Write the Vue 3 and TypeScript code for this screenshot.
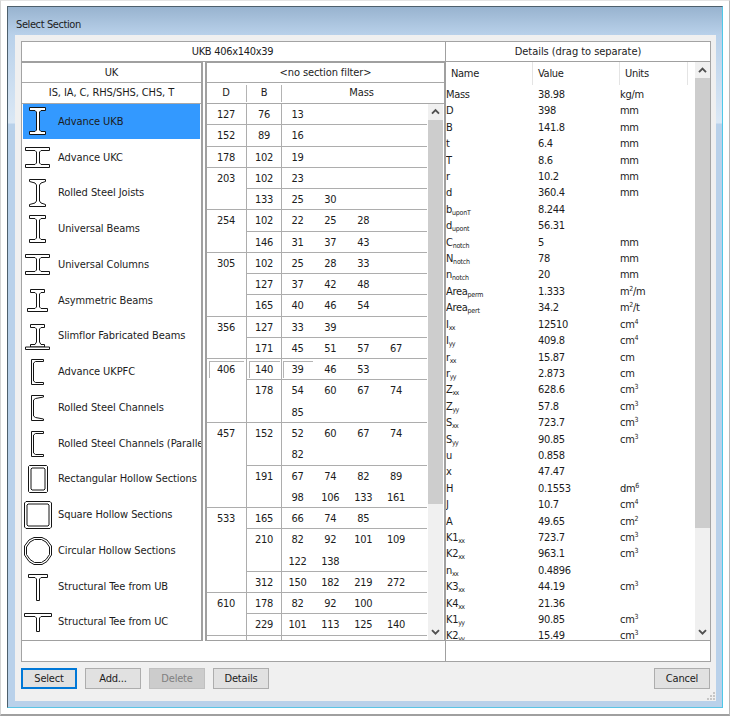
<script setup lang="ts">
interface Section {
  label: string
  paths: string[]
}
interface SizeRow {
  b: number
  masses: number[][]
  current?: boolean
}
interface SizeGroup {
  d: number
  rows: SizeRow[]
  current?: boolean
}
interface Detail {
  name: string
  sub?: string
  value: string
  unit?: string
  sup?: string
  tail?: string
}

const beam =
  'M6.5 2.5H22.5V5.5H18L16.5 7V25L18 26.5H22.5V29.5H6.5V26.5H12L13.5 25V7L12 5.5H6.5Z'
const column =
  'M2.5 5.5H26.5V8.5H18L16.5 10V21L18 22.5H26.5V25.5H2.5V22.5H12L13.5 21V10L12 8.5H2.5Z'
const channel = 'M8.5 3.5H20.5V5.5H12.5L10.5 7V25L12.5 26.5H20.5V28.5H8.5Z'

const sections: Section[] = [
  { label: 'Advance UKB', paths: [beam] },
  { label: 'Advance UKC', paths: [column] },
  {
    label: 'Rolled Steel Joists',
    paths: [
      'M6.5 2.5H22.5V4.5L18 6L16.5 8V24L18 26L22.5 27.5V29.5H6.5V27.5L12 26L13.5 24V8L12 6L6.5 4.5Z',
    ],
  },
  { label: 'Universal Beams', paths: [beam] },
  { label: 'Universal Columns', paths: [column] },
  {
    label: 'Asymmetric Beams',
    paths: [
      'M7.5 4.5H21.5V7.5H18L16.5 9V22L18 23.5H24.5V26.5H4.5V23.5H12L13.5 22V9L12 7.5H7.5Z',
    ],
  },
  {
    label: 'Slimflor Fabricated Beams',
    paths: [
      'M7.5 4.5H21.5V7.5H18L16.5 9V22L18 24.5H21.5V27H7.5V24.5H12L13.5 22V9L12 7.5H7.5Z',
      'M2.5 27H26.5V29.5H2.5Z',
    ],
  },
  { label: 'Advance UKPFC', paths: [channel] },
  {
    label: 'Rolled Steel Channels',
    paths: ['M8.5 3.5H20.5V5L12.5 6.5L10.5 8V24L12.5 25.5L20.5 27V28.5H8.5Z'],
  },
  { label: 'Rolled Steel Channels (Parallel)', paths: [channel] },
  {
    label: 'Rectangular Hollow Sections',
    paths: [
      'M6.5 2.5H23.5L24.5 3.5V28.5L23.5 29.5H6.5L5.5 28.5V3.5Z',
      'M9 5H21L22 6V26L21 27H9L8 26V6Z',
    ],
  },
  {
    label: 'Square Hollow Sections',
    paths: [
      'M3 2.5H27L28.5 4V28L27 29.5H3L1.5 28V4Z',
      'M5 5H25L26 6V26L25 27H5L4 26V6Z',
    ],
  },
  {
    label: 'Circular Hollow Sections',
    paths: [
      'M11 2.5H19L24 5L28.5 11V20L24 26.5L19 29.5H11L6 26.5L1.5 20V11L6 5Z',
      'M11.5 4.5H18.5L23 7L26.5 12V19.5L23 24.5L18.5 27.5H11.5L7 24.5L3.5 19.5V12L7 7Z',
    ],
  },
  {
    label: 'Structural Tee from UB',
    paths: ['M5.5 3.5H24.5V6.5H18L16.5 8V29.5H13.5V8L12 6.5H5.5Z'],
  },
  {
    label: 'Structural Tee from UC',
    paths: ['M1.5 7.5H28.5V10.5H18L16.5 12V25.5H13.5V12L12 10.5H1.5Z'],
  },
]

const groups: SizeGroup[] = [
  { d: 127, rows: [{ b: 76, masses: [[13]] }] },
  { d: 152, rows: [{ b: 89, masses: [[16]] }] },
  { d: 178, rows: [{ b: 102, masses: [[19]] }] },
  { d: 203, rows: [{ b: 102, masses: [[23]] }, { b: 133, masses: [[25, 30]] }] },
  { d: 254, rows: [{ b: 102, masses: [[22, 25, 28]] }, { b: 146, masses: [[31, 37, 43]] }] },
  {
    d: 305,
    rows: [
      { b: 102, masses: [[25, 28, 33]] },
      { b: 127, masses: [[37, 42, 48]] },
      { b: 165, masses: [[40, 46, 54]] },
    ],
  },
  { d: 356, rows: [{ b: 127, masses: [[33, 39]] }, { b: 171, masses: [[45, 51, 57, 67]] }] },
  {
    d: 406,
    current: true,
    rows: [
      { b: 140, masses: [[39, 46, 53]], current: true },
      { b: 178, masses: [[54, 60, 67, 74], [85]] },
    ],
  },
  {
    d: 457,
    rows: [
      { b: 152, masses: [[52, 60, 67, 74], [82]] },
      { b: 191, masses: [[67, 74, 82, 89], [98, 106, 133, 161]] },
    ],
  },
  {
    d: 533,
    rows: [
      { b: 165, masses: [[66, 74, 85]] },
      { b: 210, masses: [[82, 92, 101, 109], [122, 138]] },
      { b: 312, masses: [[150, 182, 219, 272]] },
    ],
  },
  { d: 610, rows: [{ b: 178, masses: [[82, 92, 100]] }, { b: 229, masses: [[101, 113, 125, 140]] }] },
]

const details: Detail[] = [
  { name: 'Mass', value: '38.98', unit: 'kg/m' },
  { name: 'D', value: '398', unit: 'mm' },
  { name: 'B', value: '141.8', unit: 'mm' },
  { name: 't', value: '6.4', unit: 'mm' },
  { name: 'T', value: '8.6', unit: 'mm' },
  { name: 'r', value: '10.2', unit: 'mm' },
  { name: 'd', value: '360.4', unit: 'mm' },
  { name: 'b', sub: 'uponT', value: '8.244' },
  { name: 'd', sub: 'upont', value: '56.31' },
  { name: 'C', sub: 'notch', value: '5', unit: 'mm' },
  { name: 'N', sub: 'notch', value: '78', unit: 'mm' },
  { name: 'n', sub: 'notch', value: '20', unit: 'mm' },
  { name: 'Area', sub: 'perm', value: '1.333', unit: 'm', sup: '2', tail: '/m' },
  { name: 'Area', sub: 'pert', value: '34.2', unit: 'm', sup: '2', tail: '/t' },
  { name: 'I', sub: 'xx', value: '12510', unit: 'cm', sup: '4' },
  { name: 'I', sub: 'yy', value: '409.8', unit: 'cm', sup: '4' },
  { name: 'r', sub: 'xx', value: '15.87', unit: 'cm' },
  { name: 'r', sub: 'yy', value: '2.873', unit: 'cm' },
  { name: 'Z', sub: 'xx', value: '628.6', unit: 'cm', sup: '3' },
  { name: 'Z', sub: 'yy', value: '57.8', unit: 'cm', sup: '3' },
  { name: 'S', sub: 'xx', value: '723.7', unit: 'cm', sup: '3' },
  { name: 'S', sub: 'yy', value: '90.85', unit: 'cm', sup: '3' },
  { name: 'u', value: '0.858' },
  { name: 'x', value: '47.47' },
  { name: 'H', value: '0.1553', unit: 'dm', sup: '6' },
  { name: 'J', value: '10.7', unit: 'cm', sup: '4' },
  { name: 'A', value: '49.65', unit: 'cm', sup: '2' },
  { name: 'K1', sub: 'xx', value: '723.7', unit: 'cm', sup: '3' },
  { name: 'K2', sub: 'xx', value: '963.1', unit: 'cm', sup: '3' },
  { name: 'n', sub: 'xx', value: '0.4896' },
  { name: 'K3', sub: 'xx', value: '44.19', unit: 'cm', sup: '3' },
  { name: 'K4', sub: 'xx', value: '21.36' },
  { name: 'K1', sub: 'yy', value: '90.85', unit: 'cm', sup: '3' },
  { name: 'K2', sub: 'yy', value: '15.49', unit: 'cm', sup: '3' },
]
</script>

<template>
  <div class="page">
    <div class="window">
      <div class="title">Select Section</div>
      <div class="client">
        <div class="panel">
          <div class="top">
            <div class="top-left">UKB 406x140x39</div>
            <div class="top-right">Details (drag to separate)</div>
          </div>
          <div class="body">
            <div class="types">
              <div class="head line">UK</div>
              <div class="head line">IS, IA, C, RHS/SHS, CHS, T</div>
              <div class="list">
                <div v-for="(s, i) in sections" :key="s.label" class="item" :class="{ selected: i === 0 }">
                  <svg class="icon" width="30" height="32" viewBox="0 0 30 32">
                    <path v-for="p in s.paths" :key="p" :d="p" />
                  </svg>
                  <span>{{ s.label }}</span>
                </div>
              </div>
            </div>

            <div class="sizes">
              <div class="head line">&lt;no section filter&gt;</div>
              <div class="head line columns">
                <span class="col-d">D</span>
                <span class="col-b">B</span>
                <span class="col-m">Mass</span>
              </div>
              <div class="scroller">
                <div class="grid">
                  <div v-for="g in groups" :key="g.d" class="group">
                    <div class="d-cell" :class="{ current: g.current }"><span>{{ g.d }}</span></div>
                    <div class="group-rows">
                      <div v-for="r in g.rows" :key="r.b" class="row">
                        <div class="b-cell" :class="{ current: r.current }"><span>{{ r.b }}</span></div>
                        <div class="m-cell" :class="{ current: r.current }">
                          <div v-for="(line, k) in r.masses" :key="k" class="m-line">
                            <span v-for="m in line" :key="m">{{ m }}</span>
                          </div>
                        </div>
                      </div>
                    </div>
                  </div>
                  <div class="group rest">
                    <div class="d-cell"></div>
                    <div class="group-rows"><div class="row"><div class="b-cell"></div><div class="m-cell"></div></div></div>
                  </div>
                </div>
                <div class="bar">
                  <svg class="arrow" viewBox="0 0 15 16"><path d="M4 9.7L7.5 6.2L11 9.7" /></svg>
                  <div class="thumb thumb-sizes"></div>
                  <svg class="arrow" viewBox="0 0 15 16"><path d="M4 6.2L7.5 9.7L11 6.2" /></svg>
                </div>
              </div>
            </div>

            <div class="details">
              <div class="props">
                <div class="prop-head">
                  <span>Name</span><span>Value</span><span>Units</span>
                </div>
                <div v-for="(p, i) in details" :key="i" class="prop">
                  <span>{{ p.name }}<i v-if="p.sub" class="sub" :class="{ tight: p.sub.length < 3 }">{{ p.sub }}</i></span>
                  <span>{{ p.value }}</span>
                  <span>{{ p.unit }}<i v-if="p.sup" class="sup">{{ p.sup }}</i>{{ p.tail }}</span>
                </div>
              </div>
              <div class="bar">
                <svg class="arrow" viewBox="0 0 15 16"><path d="M4 10.2L7.5 6.7L11 10.2" /></svg>
                <div class="thumb thumb-details"></div>
                <svg class="arrow" viewBox="0 0 15 16"><path d="M4 6.2L7.5 9.7L11 6.2" /></svg>
              </div>
            </div>
          </div>
          <div class="status"><div></div><div></div></div>
        </div>
        <div class="actions">
          <button class="primary">Select</button>
          <button>Add...</button>
          <button class="disabled">Delete</button>
          <button>Details</button>
          <button class="cancel">Cancel</button>
        </div>
        <svg class="grip" width="9" height="9" viewBox="0 0 9 9">
          <path d="M6 0h2v2h-2zM3 3h2v2h-2zM6 3h2v2h-2zM0 6h2v2h-2zM3 6h2v2h-2zM6 6h2v2h-2z" />
        </svg>
      </div>
    </div>
  </div>
</template>

<style>
body {
  margin: 0;
  background: #fff;
}
</style>

<style scoped>
* {
  box-sizing: border-box;
}
.page {
  width: 730px;
  height: 716px;
  padding: 5px 6px 7px 6px;
  border-style: solid;
  border-color: #e4e4e4 #b8b8b8 #a0a0a0 #d4d4d4;
  border-width: 1px 1px 2px 1px;
  background: #fff;
  font: 11px/16px 'DejaVu Sans Condensed', 'DejaVu Sans', sans-serif;
  font-stretch: condensed;
  letter-spacing: -0.3px;
  color: #1c1c1c;
  overflow: hidden;
}
.window {
  width: 716px;
  height: 702px;
  padding: 0 6px 6px 7px;
  border: 1px solid #4d5f6c;
  border-right-color: #4fc8e8;
  border-bottom-color: #5cc4e4;
  background: linear-gradient(
    #98b3cf 0,
    #b9d1ea 28px,
    #dbe8f5 116px,
    #b9d1ea 117px
  );
}
.title {
  height: 28px;
  padding: 10px 0 0 1px;
  letter-spacing: -0.4px;
}
.client {
  position: relative;
  height: 666px;
  padding: 6px 6px 0 6px;
  background: #f0f0f0;
}
.panel {
  height: 621px;
  width: 690px;
  border: 1px solid #a3a3a3;
  background: #fff;
}
.top {
  display: grid;
  grid-template-columns: 424px 1fr;
  height: 20px;
  border-bottom: 1px solid #a0a0a0;
  text-align: center;
  line-height: 19px;
}
.top-left {
  padding-right: 2px;
  border-right: 1px solid #a0a0a0;
}
.top-right {
  letter-spacing: -0.05px;
}
.body {
  display: grid;
  grid-template-columns: 181px 243px 1fr;
  height: 579px;
}
.types {
  border: solid #a0a0a0;
  border-width: 1px 2px 1px 0;
  letter-spacing: -0.08px;
  overflow: hidden;
}
.sizes {
  margin-left: 2px;
  border: solid #a0a0a0;
  border-width: 1px 2px 1px 2px;
  overflow: hidden;
}
.head {
  height: 20px;
  line-height: 20px;
  text-align: center;
  letter-spacing: -0.1px;
}
.head + .head {
  height: 21px;
}
.line {
  border-bottom: 1px solid #a8a8a8;
}
.list {
  padding-left: 1px;
}
.item {
  display: flex;
  align-items: center;
  height: 35.75px;
  margin-right: 1px;
  white-space: nowrap;
}
.item.selected {
  height: 34.75px;
  margin-bottom: 1px;
  background: #3399ff;
}
.item.selected span {
  padding-top: 1px;
}
.icon {
  flex: none;
  margin-right: 5px;
}
.icon path {
  fill: #fff;
  stroke: #151515;
  stroke-width: 1;
}
.columns {
  display: grid;
  grid-template-columns: 40px 35px 1fr;
  padding: 2px 0 1px;
  line-height: 16px;
}
.col-d,
.col-b {
  border-right: 1px solid #b4b4b4;
}
.col-d {
  padding-right: 1px;
}
.col-m {
  padding-right: 3px;
}
.scroller {
  display: flex;
  height: 536px;
}
.grid {
  width: 221px;
  padding-right: 1px;
  overflow: hidden;
}
.group {
  display: grid;
  grid-template-columns: 40px 1fr;
  text-align: center;
  line-height: 19px;
}
.d-cell {
  padding: 1px 1px 0 0;
  border-right: 1px solid #adadad;
  border-bottom: 1px solid #adadad;
}
.row {
  display: grid;
  grid-template-columns: 35px 1fr;
  border-bottom: 1px solid #adadad;
}
.b-cell {
  padding-top: 1px;
  border-right: 1px solid #adadad;
}
.m-line {
  display: grid;
  grid-template-columns: repeat(4, 32.9px);
  height: 21.27px;
  margin-left: -1px;
  padding-top: 1px;
}
.m-line:last-child {
  height: 20.27px;
}
.rest .row {
  height: 30px;
}
.current span {
  display: block;
}
.d-cell.current span,
.b-cell.current span,
.m-cell.current span:first-child {
  height: 17px;
  margin: 1px 1px 0 2px;
  border: solid #b4b4b4;
  border-width: 1px 0 0 1px;
  padding-right: 2px;
  line-height: 15px;
}
.bar {
  display: flex;
  flex-direction: column;
  width: 15px;
  background: #f0f0f0;
}
.arrow {
  flex: none;
  width: 15px;
  height: 16px;
}
.arrow path {
  fill: none;
  stroke: #505050;
  stroke-width: 1.9;
}
.thumb {
  background: #cdcdcd;
  margin-bottom: auto;
}
.thumb-sizes {
  height: 384px;
}
.thumb-details {
  height: 450px;
}
.details {
  display: flex;
  justify-content: space-between;
  height: 579px;
  border-bottom: 1px solid #a0a0a0;
  overflow: hidden;
}
.props {
  width: 243px;
}
.prop-head {
  display: grid;
  grid-template-columns: 87px 87px 68px;
  height: 23px;
  line-height: 23px;
  margin-bottom: 1px;
  letter-spacing: -0.3px;
}
.prop-head span {
  padding-left: 5px;
  border-right: 1px solid #e4e4e4;
}
.prop {
  display: grid;
  grid-template-columns: 92px 82px 1fr;
  height: 16.41px;
  line-height: 17px;
  white-space: nowrap;
}
.sub,
.sup {
  position: relative;
  font-size: 7px;
  font-style: normal;
  line-height: 0;
}
.sub {
  top: 2px;
  letter-spacing: -0.2px;
}
.sub.tight {
  letter-spacing: -0.7px;
}
.sup {
  top: -4px;
}
.status {
  display: grid;
  grid-template-columns: 424px 1fr;
  height: 20px;
}
.status div:first-child {
  border-right: 1px solid #a0a0a0;
}
.actions {
  display: flex;
  gap: 8px;
  width: 689px;
  margin-top: 6px;
}
button {
  width: 56px;
  height: 21px;
  padding: 0;
  border: 1px solid #adadad;
  background: #e1e1e1;
  font: inherit;
  letter-spacing: -0.2px;
  line-height: 19px;
  color: inherit;
}
.primary {
  border: 2px solid #0078d7;
  line-height: 18px;
}
.disabled {
  border-color: #c0c0c0;
  background: #cccccc;
  color: #808080;
}
.cancel {
  margin-left: auto;
}
.grip {
  position: absolute;
  right: 0;
  bottom: 0;
}
.grip path {
  fill: #c6c6c6;
}
</style>
